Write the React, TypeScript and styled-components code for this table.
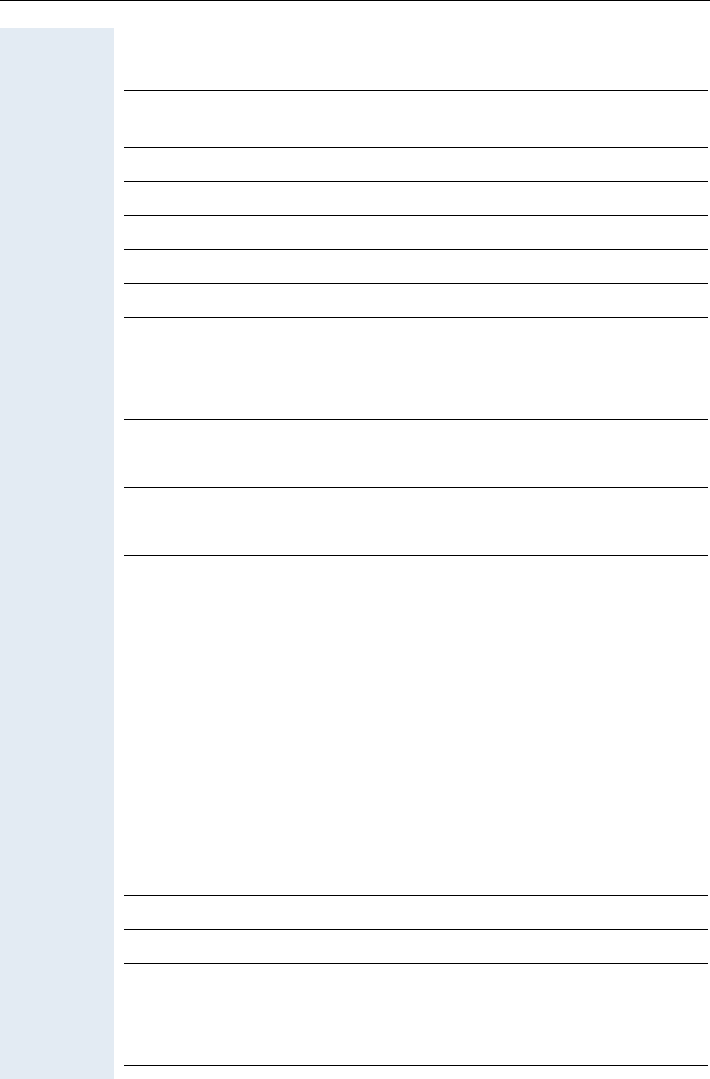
import styled, { createGlobalStyle } from "styled-components";

const GlobalStyle = createGlobalStyle`
  html, body {
    margin: 0;
    padding: 0;
    background: #ffffff;
    font-family: "Liberation Sans", Arial, sans-serif;
  }
`;

const Page = styled.div`
  display: flex;
  flex-direction: column;
  min-height: 100vh;
`;

const TopRule = styled.div`
  height: 1px;
  background: #000000;
  margin-bottom: 27px;
`;

const Body = styled.div`
  flex: 1;
  display: flex;
  gap: 10px;
`;

const Sidebar = styled.aside`
  width: 114px;
  flex-shrink: 0;
  background: #e3ebf3;
`;

const Content = styled.main`
  flex: 1;
  display: flex;
  flex-direction: column;
  margin-right: 2px;
  padding-top: 62px;
`;

const Row = styled.div<{ $h: number; $last?: boolean }>`
  box-sizing: border-box;
  height: ${(p) => p.$h + (p.$last ? 1 : 0)}px;
  border-top: 1px solid #000000;
  border-bottom: ${(p) => (p.$last ? "1px solid #000000" : "none")};
`;

// row pitches measured between the rules
const rows = [57, 34, 34, 34, 34, 34, 102, 68, 68, 340, 34, 34, 102];

export default function App() {
  return (
    <>
      <GlobalStyle />
      <Page>
        <TopRule />
        <Body>
          <Sidebar />
          <Content>
            {rows.map((h, i) => (
              <Row key={i} $h={h} $last={i === rows.length - 1} />
            ))}
          </Content>
        </Body>
      </Page>
    </>
  );
}
